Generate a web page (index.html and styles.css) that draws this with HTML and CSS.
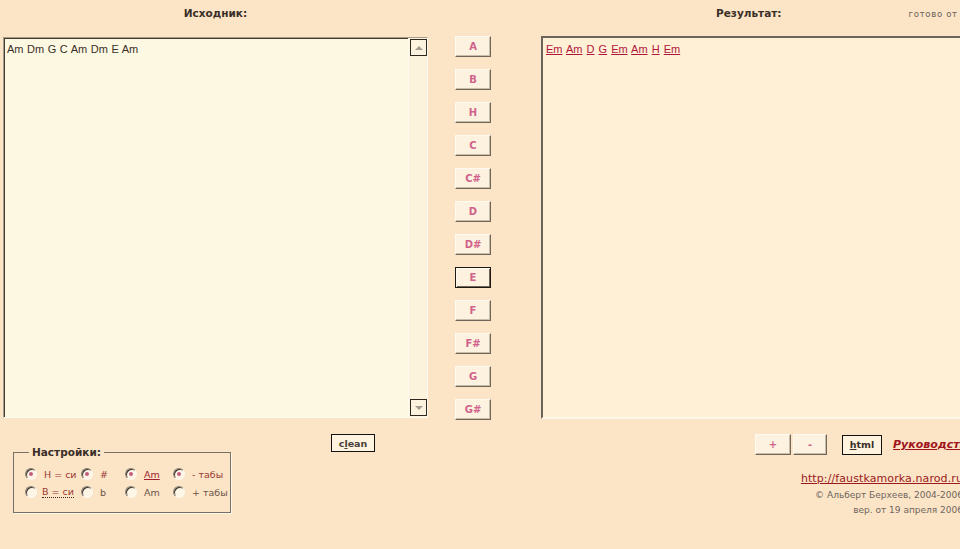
FILE: index.html
```html
<!DOCTYPE html>
<html lang="ru">
<head>
<meta charset="utf-8">
<title>Транспонирование аккордов</title>
<link rel="stylesheet" href="styles.css">
</head>
<body>
<div class="page">
  <div class="top">
    <div class="col-left">
      <div class="head"><b class="title">Исходник:</b></div>
      <div class="src">
        <div class="src-text">Am Dm G C Am Dm E Am</div>
        <div class="scroll">
          <span class="sb-btn"><span class="tri up"></span></span>
          <span class="sb-track"></span>
          <span class="sb-btn"><span class="tri down"></span></span>
        </div>
      </div>
    </div>
    <div class="col-mid">
      <button class="nb">A</button>
      <button class="nb">B</button>
      <button class="nb">H</button>
      <button class="nb">C</button>
      <button class="nb">C#</button>
      <button class="nb">D</button>
      <button class="nb">D#</button>
      <button class="nb nb-active">E</button>
      <button class="nb">F</button>
      <button class="nb">F#</button>
      <button class="nb">G</button>
      <button class="nb">G#</button>
    </div>
    <div class="col-right">
      <div class="head head-right"><b class="title">Результат:</b><span class="status">готово от</span></div>
      <div class="res">
        <a href="#">Em</a> <a href="#">Am</a> <a href="#">D</a> <a href="#">G</a> <a href="#">Em</a> <a href="#">Am</a> <a href="#">H</a> <a href="#">Em</a>
      </div>
    </div>
  </div>
  <div class="bottom">
    <div class="bottom-left">
      <fieldset class="settings">
        <legend>Настройки:</legend>
        <div class="opts">
          <label class="opt"><span class="radio on"></span><span class="lbl l1">Н = си</span></label>
          <label class="opt"><span class="radio on"></span><span class="lbl l1">#</span></label>
          <label class="opt"><span class="radio on"></span><span class="lbl l1 ul">Am</span></label>
          <label class="opt"><span class="radio on"></span><span class="lbl l1">- табы</span></label>
          <label class="opt"><span class="radio"></span><span class="lbl l1 dot">В = си</span></label>
          <label class="opt"><span class="radio"></span><span class="lbl l2">b</span></label>
          <label class="opt"><span class="radio"></span><span class="lbl l2">Am</span></label>
          <label class="opt"><span class="radio"></span><span class="lbl l2">+ табы</span></label>
        </div>
      </fieldset>
      <button class="clean">c<u>l</u>ean</button>
    </div>
    <div class="bottom-right">
      <div class="tools">
        <button class="tb tb-plus">+</button>
        <button class="tb tb-minus">-</button>
        <button class="html-btn"><u>h</u>tml</button>
        <a class="guide" href="#">Руководство</a>
      </div>
      <div class="credits">
        <a class="site" href="#">http://faustkamorka.narod.ru</a>
        <div class="copy">© Альберт Берхеев, 2004-2006</div>
        <div class="copy">вер. от 19 апреля 2006</div>
      </div>
    </div>
  </div>
</div>
</body>
</html>
```

FILE: styles.css
```css
html, body {
  margin: 0;
  padding: 0;
  overflow: hidden;
}
body {
  background: #fce4c6;
  width: 960px;
  height: 549px;
  font-family: "Liberation Sans", Arial, sans-serif;
  color: #5a4a3e;
}
.page {
  width: 972px;
  padding-left: 3px;
}
.top {
  display: flex;
}
.col-left {
  width: 425px;
}
.head {
  height: 36px;
  box-sizing: border-box;
  padding-top: 6px;
  display: flex;
  justify-content: center;
}
.title {
  font: bold 10.5px "DejaVu Sans", sans-serif;
  color: #3a2f28;
  line-height: 14px;
}
.head-right {
  justify-content: flex-start;
  padding-left: 175px;
}
.status {
  margin-left: 127px;
  font: 8.5px "DejaVu Sans", sans-serif;
  letter-spacing: 0.7px;
  color: #6a625a;
  line-height: 14px;
  padding-top: 1px;
  white-space: nowrap;
}
.src {
  margin-top: 1px;
  height: 381px;
  box-sizing: border-box;
  display: flex;
  background: #fdf8e2;
  border: 1px solid;
  border-color: #a89c8a #fffaf0 #fffaf0 #a89c8a;
  box-shadow: inset 1px 1px #463c33;
}
.src-text {
  flex: 1;
  padding: 5px 0 0 3px;
  font-size: 11px;
  line-height: 12px;
  word-spacing: 0.5px;
  color: #3a3028;
}
.scroll {
  width: 19px;
  display: flex;
  flex-direction: column;
  background: #fbf3dc;
  border-left: 1px solid #fffaf0;
  padding: 1px 0 1px 1px;
  box-sizing: border-box;
}
.sb-btn {
  width: 17px;
  height: 17px;
  box-sizing: border-box;
  border: 1px solid #2f2620;
  background: #fcf3de;
  display: flex;
  align-items: center;
  justify-content: center;
}
.sb-track {
  flex: 1;
}
.tri {
  width: 0;
  height: 0;
  border-left: 4px solid transparent;
  border-right: 4px solid transparent;
}
.tri.up {
  border-bottom: 4px solid #a39c92;
}
.tri.down {
  border-top: 4px solid #a39c92;
}
.col-mid {
  margin-left: 27px;
  width: 36px;
  padding-top: 36px;
  display: flex;
  flex-direction: column;
  gap: 12px;
}
.nb {
  width: 36px;
  height: 21px;
  padding: 0;
  margin: 0;
  box-sizing: border-box;
  background: #fdf2df;
  border: 1px solid;
  border-color: #fffaf0 #6f6658 #6f6658 #fffaf0;
  box-shadow: inset -1px -1px #c9bda9;
  font: bold 10px "DejaVu Sans", sans-serif;
  color: #d0628c;
}
.nb-active {
  border: 1px solid #1c1814;
  box-shadow: inset 1px 1px #fffaf0, inset -1px -1px #6f6658;
}
.col-right {
  margin-left: 50px;
  width: 425px;
}
.res {
  height: 383px;
  box-sizing: border-box;
  background: #fff0d6;
  border: 2px solid;
  border-color: #6b645a #fff8ea #fff8ea #6b645a;
  padding: 5px 0 0 3px;
  font-size: 11px;
  line-height: 13px;
  word-spacing: 1px;
}
.res a {
  color: #b0163c;
}
.bottom {
  display: flex;
}
.bottom-left {
  width: 538px;
  display: flex;
  align-items: flex-start;
}
.settings {
  margin: 26px 0 0 10px;
  padding: 0 6px 14px 11px;
  width: 218px;
  min-width: 0;
  box-sizing: border-box;
  border: 1px solid #777066;
  box-shadow: 1px 1px #fff6e6;
}
.settings legend {
  margin-left: 4px;
  padding: 0 3px;
  font: bold 10.5px "DejaVu Sans", sans-serif;
  color: #3a2f28;
}
.opts {
  display: grid;
  grid-template-columns: 56px 44px 48px auto;
  row-gap: 6px;
  padding-top: 10px;
}
.opt {
  display: flex;
  align-items: center;
  height: 12px;
}
.radio {
  width: 12px;
  height: 12px;
  box-sizing: border-box;
  border-radius: 50%;
  border: 1px solid;
  border-color: #8a8276 #fff8ec #fff8ec #8a8276;
  box-shadow: inset 1px 1px #3c342c;
  background: #fdf6e6;
  display: flex;
  align-items: center;
  justify-content: center;
  flex: none;
}
.radio.on::after {
  content: "";
  width: 4px;
  height: 4px;
  border-radius: 50%;
  background: #c25c80;
}
.lbl {
  margin-left: 7px;
  font: 9.5px "DejaVu Sans", sans-serif;
  white-space: nowrap;
}
.l1 {
  color: #9a3a34;
}
.l2 {
  color: #6e5448;
}
.ul {
  text-decoration: underline;
  color: #a01e30;
}
.dot {
  border-bottom: 1px dotted #3a2a20;
  margin-left: 5px;
}
.clean {
  flex: none;
  margin: 14px 0 0 100px;
  width: 44px;
  height: 18px;
  padding: 0;
  box-sizing: border-box;
  background: #fdf3df;
  border: 1px solid #141210;
  font: bold 9.5px "DejaVu Sans", sans-serif;
  color: #4a4038;
}
.bottom-right {
  width: 425px;
}
.tools {
  display: flex;
  align-items: center;
  padding: 14px 0 0 214px;
  height: 21px;
  white-space: nowrap;
}
.tools > * {
  flex: none;
}
.tb {
  height: 21px;
  padding: 0;
  box-sizing: border-box;
  background: #fdf2df;
  border: 1px solid;
  border-color: #fffaf0 #6f6658 #6f6658 #fffaf0;
  box-shadow: inset -1px -1px #c9bda9;
  font: bold 10px "DejaVu Sans", sans-serif;
  color: #d0628c;
}
.tb-plus {
  width: 36px;
  margin-right: 2px;
}
.tb-minus {
  width: 34px;
}
.html-btn {
  margin-left: 15px;
  width: 40px;
  height: 20px;
  padding: 0;
  box-sizing: border-box;
  background: #fdf3df;
  border: 1px solid #141210;
  font: bold 9.5px "DejaVu Sans", sans-serif;
  color: #3a3028;
}
.guide {
  margin-left: 11px;
  font: italic bold 11px "DejaVu Sans", sans-serif;
  color: #a0141c;
}
.credits {
  padding: 15px 3px 0 0;
  text-align: right;
  display: flex;
  flex-direction: column;
  align-items: flex-end;
}
.site {
  font: 11px "DejaVu Sans", sans-serif;
  color: #9a1a20;
  line-height: 18px;
  letter-spacing: 0.1px;
}
.copy {
  font: 9px "DejaVu Sans", sans-serif;
  color: #6e6660;
  line-height: 15px;
  white-space: nowrap;
}
```
